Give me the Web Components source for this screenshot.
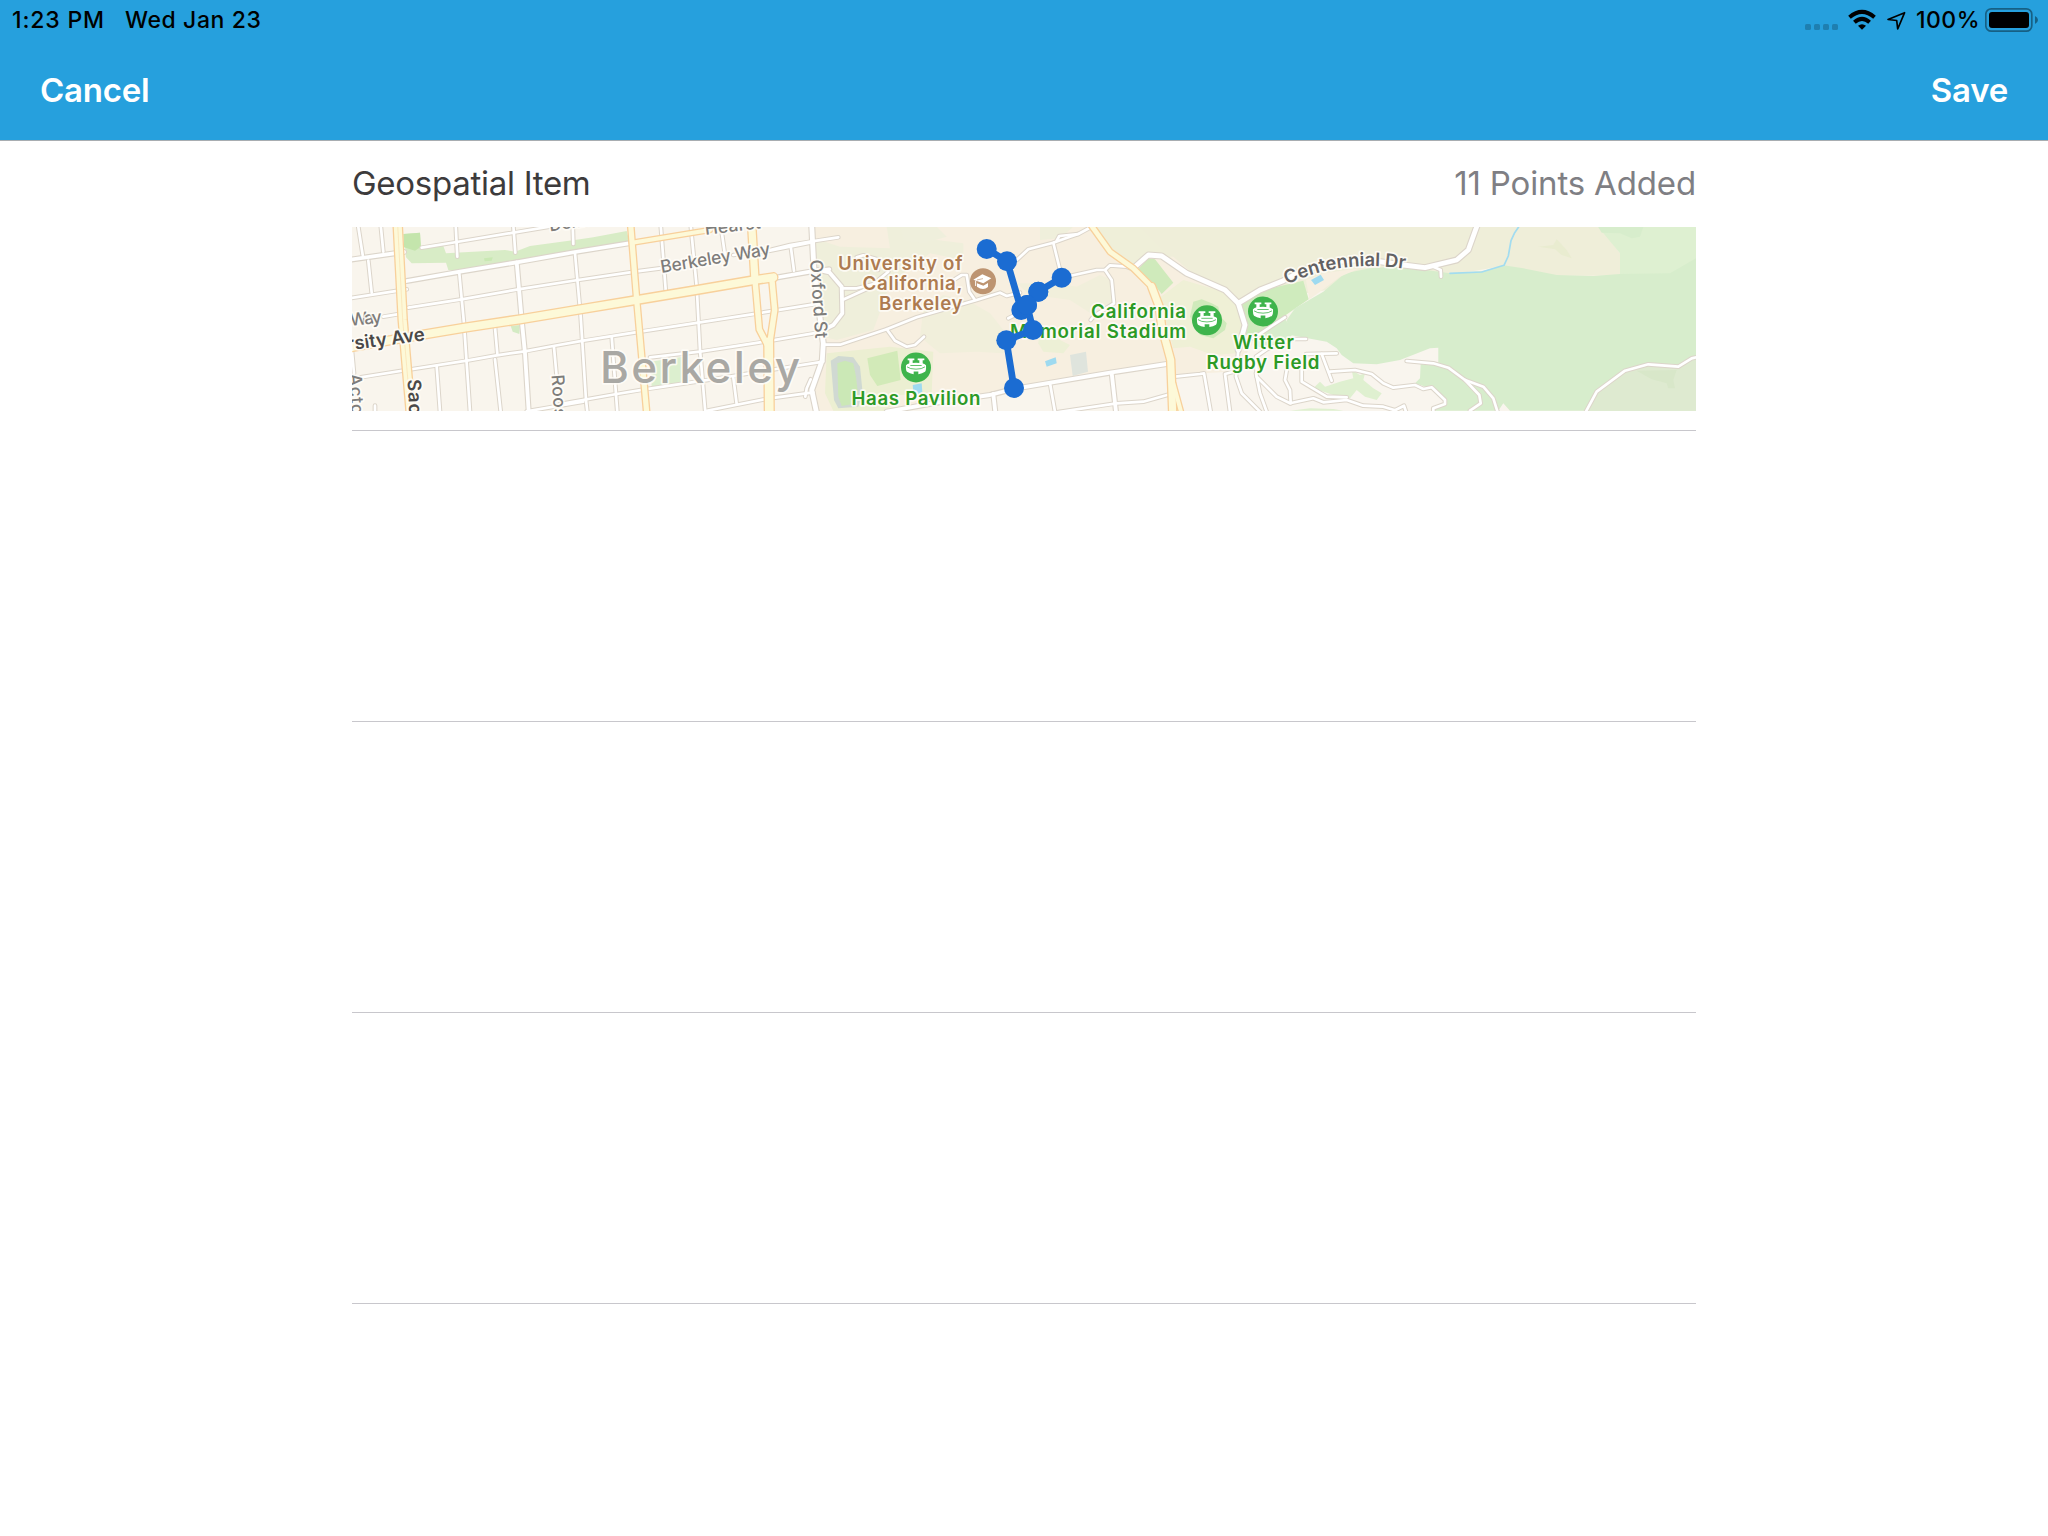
<!DOCTYPE html>
<html lang="en">
<head>
<meta charset="utf-8">
<title>Geospatial Item</title>
<style>
html,body{margin:0;height:100%;background:#fff}
body{font-family:Inter,"Liberation Sans",sans-serif}
</style>
</head>
<body>
<geo-app></geo-app>
<script>
class Base extends HTMLElement {
  connectedCallback() {
    if (!this.shadowRoot) this.attachShadow({ mode: 'open' }).innerHTML = this.render();
  }
}

customElements.define('status-bar', class extends Base {
  render() {
    return `<style>
      :host{display:flex;justify-content:space-between;align-items:center;height:40px;padding:0 10px 0 12px;color:#000;font-size:23px;font-weight:500;line-height:40px}
      .l,.r{display:flex;align-items:center;white-space:pre}
      .l{gap:20px}
      .time{letter-spacing:.85px}.date{letter-spacing:.6px}
      svg{display:block}
      .pct{letter-spacing:.5px;margin:0 5px 0 7px}
    </style>
    <div class="l"><span class="time">1:23 PM</span><span class="date">Wed Jan 23</span></div>
    <div class="r">
      <svg width="105" height="40" viewBox="0 0 105 40">
        <g fill="#000" opacity=".2"><rect x="1" y="24" width="6" height="6" rx="1.6"/><rect x="10" y="24" width="6" height="6" rx="1.6"/><rect x="19" y="24" width="6" height="6" rx="1.6"/><rect x="28" y="24" width="6" height="6" rx="1.6"/></g>
        <g fill="none" stroke="#000" stroke-width="4"><path d="M45.500 17.200Q58 6.500 70.500 17.200"/><path d="M50.400 22.200Q58 15.400 65.600 22.200"/></g>
        <path d="M54 25.800Q58 22.600 62 25.800L58 29.800Z"/>
        <path d="M100.600 12.700L84 19.500L92.700 20.500L93.700 29Z" fill="none" stroke="#000" stroke-width="1.700" stroke-linejoin="round"/>
      </svg>
      <span class="pct">100%</span>
      <svg width="53" height="40" viewBox="0 0 53 40">
        <rect x=".8" y="8.800" width="46" height="22.400" rx="5.500" fill="none" stroke="#000" stroke-opacity=".4" stroke-width="1.700"/>
        <rect x="4" y="12" width="40" height="16" rx="3"/>
        <path d="M50 16Q53 17.500 53 20T50 24Z" opacity=".4"/>
      </svg>
    </div>`;
  }
});

customElements.define('nav-bar', class extends Base {
  render() {
    return `<style>
      :host{display:flex;justify-content:space-between;align-items:center;height:100px;box-sizing:border-box;padding:0 40px;color:#fff;font-size:33px;font-weight:600;line-height:40px}
    </style><slot></slot>`;
  }
});

customElements.define('nav-button', class extends Base {
  render() {
    return `<style>:host{display:block;white-space:nowrap;letter-spacing:-.25px}</style><slot></slot>`;
  }
});

customElements.define('list-row', class extends Base {
  render() {
    return `<style>
      :host{display:flex;flex-direction:column;height:290px;border-bottom:1px solid #c8c7cc}
      header{display:flex;justify-content:space-between;align-items:center;height:86px;box-sizing:border-box;padding-bottom:2px;font-size:33px;line-height:40px;white-space:nowrap}
      .t{color:#3d3b3c;letter-spacing:-.28px}.v{color:#7f7f84;letter-spacing:-.15px}
    </style>
    ${this.hasAttribute('label') ? `<header><span class="t">${this.getAttribute('label')}</span><span class="v">${this.getAttribute('value')}</span></header>` : ''}
    <slot></slot>`;
  }
});

/* Polylines are stored in tile units: one tile origin on x, three units per pixel. */
const pts = (ox, oy, s) => s.trim().split(/\s+/).map(p => { const [x, y] = p.split(',').map(Number); return (ox + x / 3).toFixed(1) + ',' + (oy + y / 3).toFixed(1); }).join(' ');
const A = 340, B = 570, C = 790, D = 960, E = 1150, F = 1270, G = 1380;

const areas = [
  [C, 220, '#f7efe0', '65,20 72,150 100,370 97,420 65,510 80,572 290,572 440,548 600,525 720,503 960,458 1135,432 1155,470 1240,460 1320,455 1370,400 1430,300 1560,200 1560,20'],
  [C, 220, '#efefdb', '72,55 150,80 300,85 290,20 360,20 440,60 520,70 520,120 420,100 300,190 280,250 250,330 140,360 100,350 85,150'],
  [C, 220, '#efefdc', '330,20 440,20 470,50 400,70 340,60'],
  [C, 220, '#f1efdb', '400,270 460,225 540,245 600,280 640,330 640,400 560,395 450,400 390,350'],
  [C, 220, '#ecefd2', '110,400 300,380 430,395 425,520 330,525 290,572 130,572 105,520'],
  [D, 220, '#efefdb', '240,20 340,20 300,55 240,60'],
  [D, 220, '#f1efdb', '170,190 290,190 350,200 420,165 455,180 460,250 400,285 330,240 260,230 210,225'],
  [D, 220, '#edf0d6', '240,330 330,375 310,400 250,395 235,370'],
  [D, 220, '#efeed9', '395,20 455,90 520,145 570,105 640,110 720,180 850,250 1100,210 1400,120 1760,20'],
  [D, 220, '#efefd9', '400,20 540,20 640,120 570,100 520,145 450,92'],
  [E, 220, '#eff0d6', '20,240 100,180 220,215 265,250 285,315 260,400 190,405 120,380 70,385 50,310'],
  [E, 220, '#cfeabb', '130,245 155,238 185,250 205,260 212,290 230,310 225,330 190,355 150,345 120,290'],
  [D, 220, '#cfeabb', '535,148 565,115 585,118 640,188 605,222 580,190'],
  [E, 220, '#cfebbd', '270,255 330,212 460,182 476,238 400,290 320,345 275,345 288,315'],
  [E, 220, '#f9f5ee', '75,470 240,455 310,400 405,290 500,330 600,400 720,380 960,380 1060,480 1060,572 95,572'],
  [G, 150, '#efeed9', '-330,231 660,231 720,310 720,377 530,377 370,348 210,375 -60,350 -330,380'],
  [G, 150, '#def0d1', '655,231 948,231 948,372 720,375 720,310'],
  [F, 220, '#d7edcc', '50,300 75,265 160,215 225,160 300,145 370,140 430,145 540,160 640,153 700,136 760,145 860,165 970,168 1050,162 1200,160 1278,115 1278,572 720,572 700,550 685,572 490,572 525,550 515,530 480,505 435,490 450,475 452,430 505,428 505,383 480,385 390,420 320,433 250,430 215,405 200,385 170,365 60,345'],
  [F, 220, '#d7edcc', '40,290 70,330 60,360 -20,385 -50,375 -10,330'],
  [F, 220, '#f7efe0', '108,180 160,160 270,145 210,170 150,215 118,238'],
  [G, 150, '#d7edcc', '655,231 790,231 780,260 755,265 720,250 665,248'],
  [G, 150, '#e9ecd0', '475,290 520,285 530,268 560,300 575,325 545,315 525,298'],
  [G, 150, '#deead0', '625,782 650,725 735,662 805,643 895,650 948,620 948,782'],
  [G, 150, '#d8e7c9', '770,662 890,660 880,690 885,715 865,715 860,700 815,688'],
  [F, 220, '#dff0d0', '130,505 150,485 165,500 210,485 250,475 245,450 270,465 285,460 280,480 310,505 335,520 320,540 285,530 260,510 240,535 190,525'],
  [F, 220, '#dff0d0', '60,572 120,565 190,567 220,572'],
  [A, 220, '#d8ecc6', '192,42 240,38 242,83 310,78 318,100 495,90 525,95 570,78 720,58 760,52 860,33 870,70 705,96 530,127 360,155 325,150 318,128 215,130 198,112'],
  [A, 220, '#c4e5ac', '190,42 240,38 243,80 225,92 192,82'],
  [A, 220, '#c9e8b3', '432,115 458,112 455,122 434,124'],
  [A, 220, '#d4ebc4', '512,318 540,315 538,342 518,335'],
  [B, 220, '#dcefcf', '240,425 340,410 342,485 245,500'],
  [C, 220, '#d0d9d2', '122,422 145,408 190,412 210,440 218,520 205,560 145,565 132,540'],
  [C, 220, '#cbe8b6', '142,430 165,422 190,430 198,470 205,530 190,552 155,558 145,530'],
  [C, 220, '#d2eab8', '232,415 322,392 332,480 262,498 240,465'],
  [C, 220, '#9edaf0', '368,495 395,490 397,515 385,522 370,515'],
  [D, 220, '#9edaf0', '255,424 287,412 290,430 260,440'],
  [D, 220, '#dfe4dd', '330,405 378,395 384,455 338,468'],
  [E, 220, '#9edaf0', '483,180 512,164 522,180 495,195']
];

/* [kind, tile x, tile y, points]; kinds: s small, m medium, b broad */
const roads = [
  ['m', A, 220, '30,119 192,96'], ['s', A, 220, '30,235 200,208'], ['s', A, 220, '245,83 350,66 520,38 700,8'],
  ['m', A, 220, '200,183 360,155 530,127 705,96 885,67'], ['s', A, 220, '205,263 365,238 535,208 714,180 885,155 960,145'],
  ['s', A, 220, '130,290 190,280'], ['s', A, 220, '62,472 200,450 380,422 470,406 555,394 640,378 730,362 900,335 1075,308 1255,280 1440,250'],
  ['s', B, 220, '240,412 390,395 565,368 760,335'], ['s', B, 220, '-30,552 140,522 225,508 400,482 490,468 600,450 760,425'],
  ['s', A, 220, '560,574 730,545'], ['s', B, 220, '410,572 600,535 730,517'], ['s', C, 220, '-60,90 0,75 60,65 145,52'],
  ['s', B, 220, '490,105 600,92 720,68'], ['m', B, 220, '612,174 720,155 778,148'],
  ['s', A, 220, '54,15 68,105'], ['s', A, 220, '122,15 130,95'], ['s', A, 220, '85,122 95,218'],
  ['s', A, 220, '347,15 352,110'], ['s', A, 220, '520,15 526,98'], ['s', A, 220, '698,15 700,72'],
  ['s', A, 220, '358,160 372,310 380,430 390,575'], ['m', A, 220, '530,127 545,300 555,400 566,575'],
  ['s', A, 220, '465,322 472,400'], ['s', A, 220, '465,418 482,575'], ['s', A, 220, '290,440 300,575'], ['s', A, 220, '642,382 650,470'],
  ['s', A, 220, '705,100 722,290 738,540 742,575'], ['s', A, 220, '36,395 42,460'], ['s', A, 220, '105,557 105,575'],
  ['s', B, 220, '272,15 287,210'], ['s', B, 220, '362,15 380,200 390,390 406,575'], ['s', B, 220, '452,15 465,105'],
  ['s', B, 220, '125,350 142,575'], ['s', B, 220, '490,472 500,552'], ['s', B, 220, '662,78 672,152'],
  ['s', B, 220, '722,478 710,505 706,530'],
  ['b', C, 220, '65,15 72,150 100,370 97,420 65,510 80,580'], ['m', C, 220, '85,150 118,157 155,200 157,280 130,315 100,330'],
  ['s', C, 220, '157,240 235,205 295,155'], ['s', C, 220, '157,205 200,205 262,190'], ['s', C, 220, '200,112 220,106 262,118 264,150'],
  ['s', C, 220, '100,374 150,374 290,328 380,292 560,240 630,218 650,228 690,218'],
  ['s', C, 220, '290,328 315,362 350,380 375,375 402,350'], ['s', C, 220, '475,190 515,165 530,165 538,215 555,240'],
  ['s', D, 220, '170,120 205,88 280,68 330,50 355,42 395,20'], ['s', D, 220, '290,62 298,48 355,42'], ['s', D, 220, '280,68 300,150'],
  ['s', D, 220, '145,295 185,275'], ['s', D, 220, '305,173 410,150 435,150 455,180 462,250 402,288 392,300'],
  ['s', D, 220, '435,150 450,136 500,140 520,148'], ['b', D, 220, '520,145 565,105 605,108 680,160 795,210 835,250 855,315 835,390'],
  ['s', E, 220, '265,390 258,470 275,520 330,575'], ['m', D, 220, '-220,575 -70,548 90,525 160,507 450,458 620,432'],
  ['s', D, 220, '270,490 285,575'], ['m', D, 220, '100,522 106,575'], ['m', D, 220, '455,460 468,575'],
  ['s', D, 220, '290,577 470,550 550,545 632,522'], ['s', D, 220, '645,470 720,462 732,460 752,575'],
  ['b', E, 220, '265,250 330,210 400,182 460,150 560,125 640,118 760,135 825,143 920,120 955,90 982,15'],
  ['s', F, 220, '490,140 512,150 513,170'], ['s', E, 220, '250,455 225,462 240,575'],
  ['s', E, 220, '310,355 405,292'], ['s', E, 220, '320,460 318,410 350,388 430,357 468,357'],
  ['s', E, 220, '320,470 380,530 420,550 490,535 520,547 590,540 640,557 700,560 735,571 762,557 768,575'],
  ['s', E, 220, '318,460 330,520 350,575'], ['s', E, 220, '412,440 405,480 420,510 422,550'],
  ['s', E, 220, '455,440 455,485 530,530 590,532'], ['s', E, 220, '468,402 560,400'], ['s', E, 220, '515,402 545,482'],
  ['s', F, 220, '180,455 255,450 305,462 340,490 370,503 435,495 460,507 485,502 525,540 525,552 490,565 490,577'],
  ['s', F, 220, '410,423 490,430 535,443 585,480 640,500 670,535 683,577'], ['s', F, 220, '585,480 628,525 632,550 600,572'],
  ['s', G, 150, '615,790 650,725 735,662 805,643 895,650 935,625 960,620']
];

/* [width, tile, points] */
const avenues = [
  [4, B, '186,68 360,40 420,30'], [5.2, B, '182,15 200,240 230,578'], [7.2, B, '545,15 555,180'],
  [5.4, B, '555,180 568,328 595,380'], [5.4, B, '605,172 614,270 600,365'], [8.6, B, '596,365 598,578'],
  [7.8, A, '20,384 200,352 375,323 540,298 720,268 890,240 1070,210 1245,180 1300,172'],
  [8, A, '173,15 188,300 212,578'], [4.8, D, '393,15 450,95 520,145 575,200'],
  [7, D, '575,200 598,260 605,320 632,420 638,578'], [4, D, '640,490 664,578']
];

const route = '80,87 141,124 184,270 201,255 235,215 305,173 235,215 201,255 219,330 139,361 162,504';

const stadium = (x, y) => `<g transform="translate(${x} ${y}) scale(.3333)"><circle r="45" fill="#3eb44c"/>
  <g fill="#fff"><path d="M-30-7Q-22-14 0-14T30-7Q31 8 27 13Q19 19 7 20V12H-7V20Q-19 19-27 13Q-31 8-30-7Z"/><path d="M-25-27H-5V-22H-10V-10H-20V-22H-25ZM5-27H25V-22H20V-10H10V-22H5Z"/></g>
  <path d="M-27-2Q-18 5 0 5T27-2M-17-6H17" fill="none" stroke="#3eb44c" stroke-width="2.400"/></g>`;

customElements.define('route-map', class extends Base {
  render() {
    const W = { s: [4.7, 2.7], m: [6, 3.8], b: [7, 4.8] };
    const line = (p, c, w) => `<polyline points="${p}" stroke="${c}" stroke-width="${w}"/>`;
    const t = (s, x, y, len, size, cls, rot = 0) => `<text class="${cls}" font-size="${size}" textLength="${len}" transform="translate(${x} ${y}) rotate(${rot})">${s}</text>`;
    const r = pts(D, 220, route);
    return `<style>
      :host{display:block;height:184px;overflow:hidden}
      svg{display:block;width:100%;height:184px}
      polyline{fill:none;stroke-linejoin:round;stroke-linecap:round}
      text{paint-order:stroke;stroke:#fffdf8;stroke-opacity:.85;stroke-width:3.500px;stroke-linejoin:round;font-family:Inter,"Liberation Sans",sans-serif}
      .st{fill:#7e7d7b;font-weight:500}.dk{fill:#4a4948;font-weight:600}.md{fill:#626163;font-weight:600}
      .city{fill:#a9a8a4;font-weight:500}.gr{fill:#2c9a26;font-weight:600}.br{fill:#ad7b50;font-weight:600}
    </style>
    <svg viewBox="352 227 1344 184" preserveAspectRatio="none">
      <rect x="352" y="227" width="1344" height="184" fill="#f9f5ed"/>
      ${areas.map(a => `<polygon fill="${a[2]}" points="${pts(a[0], a[1], a[3])}"/>`).join('')}
      ${roads.map(a => line(pts(a[1], a[2], a[3]), '#dcd5ca', W[a[0]][0])).join('')}
      ${roads.map(a => line(pts(a[1], a[2], a[3]), '#fff', W[a[0]][1])).join('')}
      ${avenues.map(a => line(pts(a[1], 220, a[2]), '#f8d09b', a[0] + 2.6)).join('')}
      ${avenues.map(a => line(pts(a[1], 220, a[2]), '#fdf9d8', a[0])).join('')}
      ${line(pts(A, 220, '173,15 188,300 212,578'), '#fae3b8', .8)}
      ${line(pts(G, 150, '210,370 305,366 372,346 385,318 393,272 404,248 420,225'), '#a2dcf0', 1.7)}
      ${t('Delaware', 550, 231.500, 75, 17, 'st', -9)}
      ${t('Hearst', 705.500, 235, 56, 17.500, 'st', -7)}
      ${t('Berkeley Way', 661.500, 273, 111, 17.500, 'st', -9.500)}
      ${t('Way', 350.500, 326, 32, 17.500, 'st', -6)}
      ${t('rsity Ave', 348, 350.500, 78, 18.500, 'dk', -7.500)}
      ${t('Acto', 349, 374, 41, 17.500, 'st', 86)}
      ${t('Sac', 407.500, 379.500, 35, 18.500, 'dk', 87)}
      ${t('Roos', 551.500, 375, 43, 17.500, 'st', 86)}
      ${t('Oxford St', 810, 260, 79, 17.500, 'st', 86)}
      ${t('Berkeley', 600, 383, 200, 44, 'city')}
      ${t('University of', 838, 269.500, 124.500, 18.700, 'br')}
      ${t('California,', 862.500, 289.500, 100, 18.700, 'br')}
      ${t('Berkeley', 879, 309.500, 83.500, 18.700, 'br')}
      ${t('Haas Pavilion', 851.500, 405.300, 129, 18.700, 'gr')}
      ${t('California', 1091, 317.800, 95, 18.700, 'gr')}
      ${t('Memorial Stadium', 1010, 338, 176, 18.700, 'gr')}
      ${t('Witter', 1233, 349, 61, 18.700, 'gr')}
      ${t('Rugby Field', 1206.500, 369, 113, 18.700, 'gr')}
      <path id="cd" d="M1287 284.500Q1341 258 1410 269.500" fill="none"/>
      <text class="md" font-size="18.500"><textPath href="#cd" textLength="121">Centennial Dr</textPath></text>
      <g transform="translate(983 281.300) scale(.3333)"><circle r="39" fill="#bd9471"/><path d="M-29-5L-2-21L25-9L1 6Z M-18 6L1 13L15 5V17Q0 30-18 16Z" fill="#fff"/><path d="M-22-2V14" stroke="#fff" stroke-width="3"/><path d="M-18-4L0-8" stroke="#bd9471" stroke-width="2"/></g>
      ${stadium(916, 367.5)}${stadium(1207, 320.300)}${stadium(1263, 311.500)}
      ${line(r, '#1b6cd2', 6.8)}
      ${r.split(' ').map(p => { const [x, y] = p.split(','); return `<circle cx="${x}" cy="${y}" r="10" fill="#1b6cd2"/>`; }).join('')}
    </svg>`;
  }
});

customElements.define('geo-app', class extends Base {
  render() {
    return `<style>
      :host{display:block;height:1536px;background:#fff;overflow:hidden}
      .top{background:#26a0dd;border-bottom:1px solid #a8adb1}
      main{display:flex;flex-direction:column;width:1344px;margin:0 auto}
    </style>
    <div class="top"><status-bar></status-bar><nav-bar><nav-button>Cancel</nav-button><nav-button>Save</nav-button></nav-bar></div>
    <main>
      <list-row label="Geospatial Item" value="11 Points Added" style="height:289px"><route-map></route-map></list-row>
      <list-row></list-row><list-row></list-row><list-row></list-row>
    </main>`;
  }
});
</script>
</body>
</html>
